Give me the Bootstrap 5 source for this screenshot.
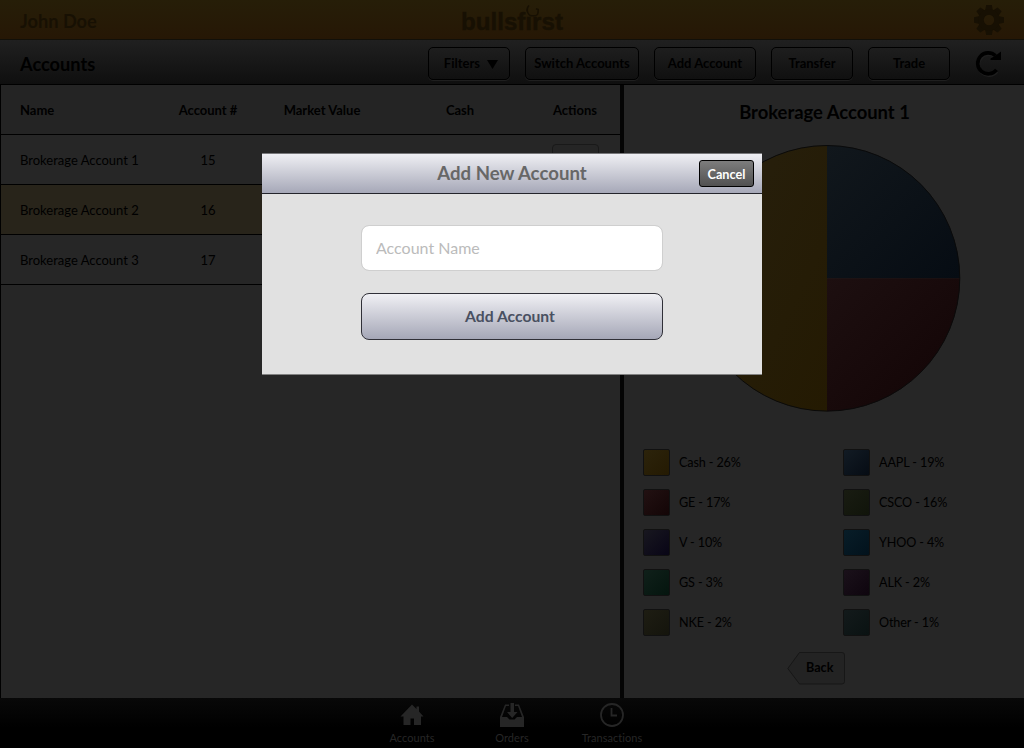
<!DOCTYPE html>
<html lang="en">
<head>
<meta charset="utf-8">
<meta name="viewport" content="width=device-width, initial-scale=1">
<title>bullsfirst</title>
<link href="https://cdn.jsdelivr.net/npm/bootstrap@5.3.0/dist/css/bootstrap.min.css" rel="stylesheet">
<style>
body{font-family:Lato,"Open Sans",sans-serif;font-size:13px;line-height:20px;color:#000;background:#262626;height:748px;overflow:hidden}
.top-bar{height:40px;background:linear-gradient(#261e08,#261705);border-bottom:1px solid #121009;color:#171003}
.side{width:240px}
.user-name{font-size:18.2px;padding-top:2px}
.logo{font-family:"Liberation Sans",Arial,sans-serif;font-size:24px;line-height:30px;letter-spacing:.05px;padding-top:4px;-webkit-text-stroke:.4px #171003}
.logo svg{left:64px;top:0}
.tool-bar{height:45px;background:linear-gradient(#202020,#0f0f0f);border-bottom:1px solid #000;padding:7px 20px 0}
.page-title{font-size:18.2px;line-height:34px}
.tool-btn{height:33px;border:1.5px solid #000;border-radius:5px;background:linear-gradient(#1e1e1e,#101010);color:#000;font-size:13px;font-weight:700;line-height:20px;padding:0 0 1px;box-shadow:0 1px 0 #1f1f1f}
.w82{width:82px}.w102{width:102px}.w114{width:114px}
.gap-tool{gap:15px}
.work{height:613px}
.accounts{width:624px;border-left:1px solid #000;border-right:4px solid #040404}
.grid-accounts{table-layout:fixed;border-collapse:separate;border-spacing:0;line-height:20px;--bs-table-bg:transparent;--bs-table-color:#000}
.grid-accounts>:not(caption)>*>*{height:50px;padding:0;border-bottom:1px solid #000;vertical-align:middle;color:#000}
.grid-accounts thead th{background:#242424}
.grid-accounts .picked td{background:#28241a}
.grid-accounts tr>:first-child{padding-left:19px}
.grid-accounts tr>:last-child{padding-right:2px}
.row-btn{width:47px;height:33px;margin-top:1px;border:1px solid #191919;border-radius:4px;background:#252525}
.chart{border-right:1px solid #080808;padding-top:15px}
.chart-title{font-size:18.4px;line-height:24px;width:401px}
.pie{margin:20px 0 0 69px}
.legend-grid{grid-template-columns:200px 170px;row-gap:12px;padding:36px 0 0 19px;font-size:12.6px;letter-spacing:-.12px}
.legend-cell{height:28px;gap:9px}
.legend-cell span{padding-top:1px}
.swatch{width:27px;height:27px;border:1.5px solid #111;border-radius:2px}
.back{margin:16px 0 0 163px;width:58px;height:33px}
.back span{left:19px;top:6px;font-size:12.6px}
.bottom-bar{height:50px;background:linear-gradient(#080808,#000 60%);color:#262626;font-size:11px;line-height:14px;letter-spacing:.05px}
.tab-item{width:100px;padding-top:5px}
.tab-item svg{display:block;height:24px;margin:0 auto 4px}
.new-account{top:153px;left:262px;width:500px;height:222px;background:#e1e1e1;border-top:1px solid #77777a;border-bottom:1px solid #818181}
.sheet-head{height:40px;background:linear-gradient(#efeff3,#a6a8b8);border-bottom:1px solid #23242b}
.sheet-title{font-size:18.6px;line-height:39px;color:#676767}
.cancel{right:8px;top:6px;width:55px;height:27px;border:1px solid #000;border-radius:3px;background:linear-gradient(#7d7d7d,#515151);color:#fff;font-size:12.7px;font-weight:700;line-height:20px;padding:0}
.sheet-body{padding:31px 99px 0}
.name-field{height:46px;border:1px solid #cfcfcf;border-radius:8px;padding:0 14px 1px;font-size:16px;color:#333}
.name-field::placeholder{color:#bbb;opacity:1}
.submit{height:47px;margin-top:22px;border:1px solid #303038;border-radius:8px;background:linear-gradient(#f0f0f4,#a5a7b7);color:#495061;font-size:15.7px;font-weight:700;padding:1px 4px 0 0}
</style>
</head>
<body>
<header class="top-bar d-flex justify-content-between align-items-center px-3">
  <div class="side ps-1 fw-bold user-name">John Doe</div>
  <div class="logo fw-bold position-relative"><span>bullsfırst</span>
    <svg class="position-absolute" width="16" height="18" viewBox="0 0 16 18" fill="none" stroke="#171003" stroke-width="1.500"><path d="M4 2.500Q1.500 5 2 8.500M2.300 7.500Q3 12.500 6.500 12.700Q12.500 13.500 13 10L13.200 6.500L11 5.800"/></svg>
  </div>
  <div class="side d-flex justify-content-end pe-1">
    <svg width="30" height="30" viewBox="-15 -15 30 30"><g fill="#171003"><g id="t"><path d="M-2.800-15h5.600l1.200 6h-8z"/><path d="M-2.800-15h5.600l1.200 6h-8z" transform="rotate(45)"/><path d="M-2.800-15h5.600l1.200 6h-8z" transform="rotate(90)"/><path d="M-2.800-15h5.600l1.200 6h-8z" transform="rotate(135)"/></g><use href="#t" transform="rotate(180)"/></g><circle r="8" fill="none" stroke="#171003" stroke-width="5.500"/></svg>
  </div>
</header>
<nav class="tool-bar d-flex justify-content-between">
  <div class="page-title fw-bold">Accounts</div>
  <div class="d-flex gap-tool">
    <button class="btn tool-btn w82 ps-1">Filters <svg class="ms-1" width="11" height="9" viewBox="0 0 11 9"><path d="M0 0h11L5.500 9z"/></svg></button>
    <button class="btn tool-btn w114">Switch Accounts</button>
    <button class="btn tool-btn w102">Add Account</button>
    <button class="btn tool-btn w82">Transfer</button>
    <button class="btn tool-btn w82">Trade</button>
    <svg class="ms-2" width="31" height="31" viewBox="0 0 31 31"><path d="M22.500 22.500A10.500 10.500 0 1 1 21.500 8" transform="translate(1.500 2)" fill="none" stroke="#1f1f1f" stroke-width="3.500"/><path d="M22.500 22A10.500 10.500 0 1 1 21.500 8" transform="translate(1 .8)" fill="none" stroke="#000" stroke-width="3.600"/><path d="M28 4.500V13H17.500V11.500L22 9z"/></svg>
  </div>
</nav>
<main class="work d-flex">
  <section class="accounts flex-shrink-0">
    <table class="table grid-accounts mb-0 text-center">
      <colgroup><col style="width:159px"><col style="width:96px"><col style="width:132px"><col style="width:144px"><col></colgroup>
      <thead><tr><th class="text-start">Name</th><th>Account #</th><th>Market Value</th><th>Cash</th><th>Actions</th></tr></thead>
      <tbody>
        <tr><td class="text-start">Brokerage Account 1</td><td>15</td><td></td><td></td><td><div class="row-btn mx-auto"></div></td></tr>
        <tr class="picked"><td class="text-start">Brokerage Account 2</td><td>16</td><td></td><td></td><td></td></tr>
        <tr><td class="text-start">Brokerage Account 3</td><td>17</td><td></td><td></td><td></td></tr>
      </tbody>
    </table>
  </section>
  <section class="chart flex-grow-1">
    <div class="chart-title fw-bold text-center">Brokerage Account 1</div>
    <svg class="pie d-block" width="268" height="268" viewBox="-134 -134.300 268 268">
      <defs>
        <linearGradient id="gy" x2="1" y2="1"><stop stop-color="#27200e"/><stop offset="1" stop-color="#241a02"/></linearGradient>
        <linearGradient id="gb" x2="1" y2="1"><stop stop-color="#11171c"/><stop offset="1" stop-color="#060c13"/></linearGradient>
        <linearGradient id="gr" x2="1" y2="1"><stop stop-color="#1d0f10"/><stop offset="1" stop-color="#120405"/></linearGradient>
      </defs>
      <path d="M0-133A133 133 0 0 0 0 133z" fill="url(#gy)"/><path d="M0 0V-133A133 133 0 0 1 133 0z" fill="url(#gb)"/><path d="M0 0H133A133 133 0 0 1 0 133z" fill="url(#gr)"/>
      <circle r="132.800" fill="none" stroke="#0a0a0a"/>
    </svg>
    <div class="d-grid legend-grid">
      <div class="d-flex align-items-center legend-cell"><i class="swatch" style="background:linear-gradient(135deg,#2c230b,#241a02)"></i><span>Cash - 26%</span></div>
      <div class="d-flex align-items-center legend-cell"><i class="swatch" style="background:linear-gradient(135deg,#121b24,#060c14)"></i><span>AAPL - 19%</span></div>
      <div class="d-flex align-items-center legend-cell"><i class="swatch" style="background:linear-gradient(135deg,#221112,#130506)"></i><span>GE - 17%</span></div>
      <div class="d-flex align-items-center legend-cell"><i class="swatch" style="background:linear-gradient(135deg,#191c12,#10140a)"></i><span>CSCO - 16%</span></div>
      <div class="d-flex align-items-center legend-cell"><i class="swatch" style="background:linear-gradient(135deg,#18171f,#080516)"></i><span>V - 10%</span></div>
      <div class="d-flex align-items-center legend-cell"><i class="swatch" style="background:linear-gradient(135deg,#081d28,#02121c)"></i><span>YHOO - 4%</span></div>
      <div class="d-flex align-items-center legend-cell"><i class="swatch" style="background:linear-gradient(135deg,#10201a,#04150e)"></i><span>GS - 3%</span></div>
      <div class="d-flex align-items-center legend-cell"><i class="swatch" style="background:linear-gradient(135deg,#1a111a,#0e050e)"></i><span>ALK - 2%</span></div>
      <div class="d-flex align-items-center legend-cell"><i class="swatch" style="background:linear-gradient(135deg,#1e1d13,#14140c)"></i><span>NKE - 2%</span></div>
      <div class="d-flex align-items-center legend-cell"><i class="swatch" style="background:linear-gradient(135deg,#131a1b,#0a1212)"></i><span>Other - 1%</span></div>
    </div>
    <div class="back position-relative">
      <svg class="d-block" width="58" height="33" viewBox="0 0 58 33"><path d="M12.500.5H55Q57.500.500 57.500 3V29.500Q57.500 32 55 32H12.500L.8 16.500z" fill="#232323" stroke="#171717"/></svg>
      <span class="position-absolute fw-bold">Back</span>
    </div>
  </section>
</main>
<footer class="bottom-bar d-flex justify-content-center text-center">
  <div class="tab-item"><svg width="24" height="24" viewBox="0 0 24 24" fill="#262626"><path d="M12 1.500L16.500 6V3.500H19V8.500L23.500 13.500H21V22H14V15.500H10.500V22H3.500V13.500H.5z"/></svg><div>Accounts</div></div>
  <div class="tab-item"><svg width="24" height="24" viewBox="0 0 24 24" fill="#262626"><path d="M0 14L5 1.500H9V3H6L2 14H7L9.500 16.500H14.500L17 14H22L18 3H15V1.500H19L24 14V24H0zM10.500 0h3.500v9h3.500L12.200 15 7 9h3.500z"/></svg><div>Orders</div></div>
  <div class="tab-item"><svg width="24" height="24" viewBox="0 0 24 24" fill="none" stroke="#262626" stroke-width="1.800"><circle cx="12" cy="12" r="11"/><path d="M11.500 5V12.500H17"/></svg><div>Transactions</div></div>
</footer>
<div class="new-account position-absolute" role="dialog">
  <div class="sheet-head position-relative text-center">
    <div class="sheet-title fw-bold">Add New Account</div>
    <button class="btn cancel position-absolute">Cancel</button>
  </div>
  <div class="sheet-body">
    <input class="form-control name-field" placeholder="Account Name">
    <button class="btn submit w-100">Add Account</button>
  </div>
</div>
<script src="https://cdn.jsdelivr.net/npm/bootstrap@5.3.0/dist/js/bootstrap.bundle.min.js"></script>
</body>
</html>
